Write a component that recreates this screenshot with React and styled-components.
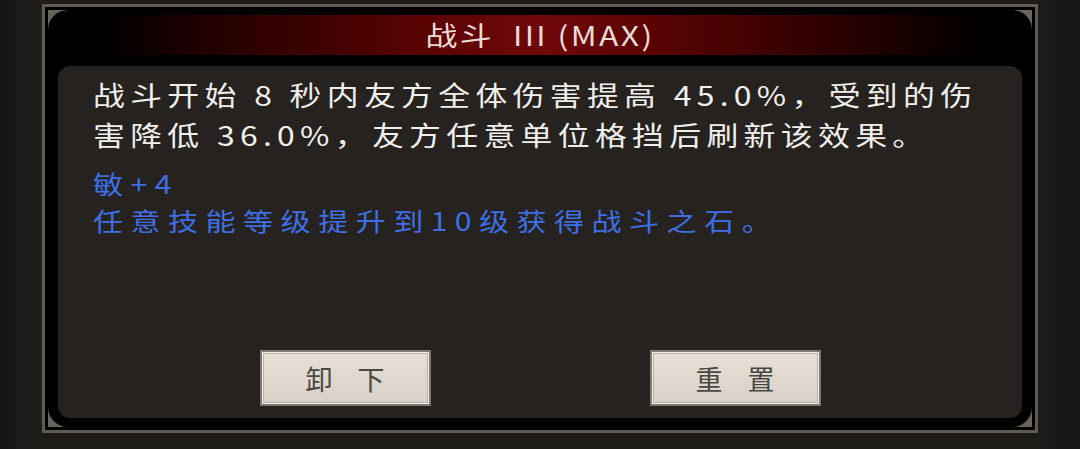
import styled, { createGlobalStyle } from 'styled-components';

const GlobalStyle = createGlobalStyle`
  html, body {
    margin: 0;
    padding: 0;
    background: #1c1a17;
  }
  body {
    font-family: "Noto Sans CJK SC", "Noto Sans", sans-serif;
  }
`;

const wedge = '#67645c';

export default function App() {
  return (
    <>
      <GlobalStyle />
      <Screen>
        <Frame>
          <Corners>
            <Panel>
              <TitleBar>
                <TitleText>战斗&nbsp; III (MAX)</TitleText>
              </TitleBar>
              <Content>
                <Description>
                  <TextLine>战斗开始 8 秒内友方全体伤害提高 45.0%，受到的伤</TextLine>
                  <TextLine>害降低 36.0%，友方任意单位格挡后刷新该效果。</TextLine>
                </Description>
                <Bonus>
                  <BonusLine>敏+4</BonusLine>
                  <BonusLine>任意技能等级提升到10级获得战斗之石。</BonusLine>
                </Bonus>
                <Actions>
                  <ActionButton>卸下</ActionButton>
                  <ActionButton>重置</ActionButton>
                </Actions>
              </Content>
            </Panel>
          </Corners>
        </Frame>
      </Screen>
    </>
  );
}

const Screen = styled.div`
  width: 1080px;
  height: 449px;
  padding: 4px 0 0 42px;
  box-sizing: border-box;
  overflow: hidden;
  background: linear-gradient(90deg, #151412 0px, #201e1b 30px, #1d1b18 60px, #1d1b18 1040px, #171614 1080px);
`;

const Frame = styled.div`
  width: 996px;
  height: 429px;
  box-sizing: border-box;
  border: 3px solid #5f5c55;
  padding: 3px;
  background: #000;
  display: flex;
`;

const Corners = styled.div`
  flex: 1;
  display: flex;
  background:
    linear-gradient(135deg, ${wedge} 50%, transparent 50%) top left / 22px 22px no-repeat,
    linear-gradient(225deg, ${wedge} 50%, transparent 50%) top right / 22px 22px no-repeat,
    linear-gradient(45deg, ${wedge} 50%, transparent 50%) bottom left / 22px 22px no-repeat,
    linear-gradient(315deg, ${wedge} 50%, transparent 50%) bottom right / 22px 22px no-repeat;
`;

const Panel = styled.div`
  flex: 1;
  display: flex;
  flex-direction: column;
  gap: 11px;
  background: #000;
  border-radius: 20px;
  padding: 5px 10px 9px;
`;

const TitleBar = styled.div`
  height: 40px;
  display: flex;
  align-items: center;
  justify-content: center;
  background: linear-gradient(
    90deg,
    #000 0%,
    #000 4%,
    #2e0000 20%,
    #5a0303 38%,
    #700808 50%,
    #5a0303 62%,
    #2e0000 80%,
    #000 96%,
    #000 100%
  );
`;

/* the game renders its text a little wider than tall */
const TitleText = styled.span`
  display: inline-block;
  color: #eadbd6;
  font-size: 27px;
  line-height: 38px;
  letter-spacing: 2px;
  transform: scaleX(1.18);
`;

const Content = styled.div`
  flex: 1;
  display: flex;
  flex-direction: column;
  background: #25221f;
  border-radius: 12px;
  padding: 9px 20px 12px 35px;
`;

const Description = styled.div`
  align-self: flex-start;
  display: flex;
  flex-direction: column;
  color: #f1efeb;
  font-size: 27px;
  letter-spacing: 4.5px;
  transform: scaleX(1.18);
  transform-origin: left center;
`;

const TextLine = styled.div`
  height: 40px;
  line-height: 40px;
  white-space: nowrap;
`;

const Bonus = styled.div`
  align-self: flex-start;
  margin-top: 9px;
  display: flex;
  flex-direction: column;
  transform: scaleX(1.18);
  transform-origin: left center;
`;

const BonusLine = styled.div`
  height: 37px;
  color: #3f6fe2;
  font-size: 25.5px;
  line-height: 37px;
  letter-spacing: 6.3px;
  white-space: nowrap;
`;

const Actions = styled.div`
  margin-top: auto;
  display: flex;
  justify-content: center;
  gap: 219px;
  margin-left: -25px;
  margin-right: -10px;
`;

const ActionButton = styled.button`
  width: 171px;
  height: 56px;
  box-sizing: border-box;
  border: 2px solid #7e7a73;
  box-shadow: inset 0 0 0 1px #f4efe8, inset 0 0 0 2px #b8b2a9;
  background: linear-gradient(180deg, #e6e0d7 0%, #ded7cd 60%, #d8d1c7 100%);
  color: #4a4743;
  font-family: "Noto Sans CJK SC", sans-serif;
  font-size: 27px;
  letter-spacing: 25px;
  padding: 0 0 0 25px;
  display: flex;
  align-items: center;
  justify-content: center;
`;
